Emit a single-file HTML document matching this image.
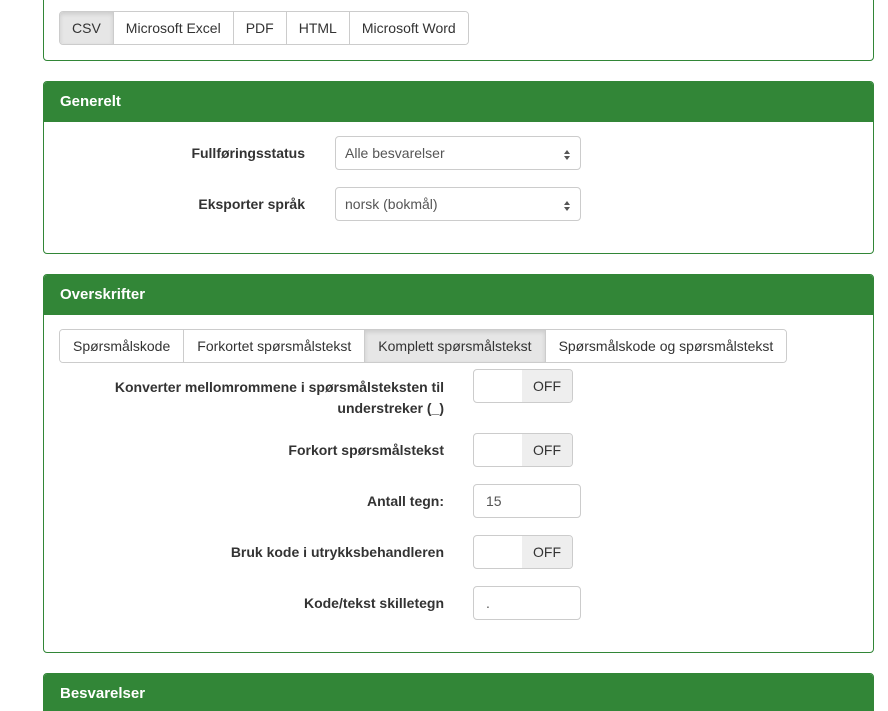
<!DOCTYPE html>
<html><head><style>
*{box-sizing:border-box}
html,body{margin:0;width:888px;height:711px;overflow:hidden}
body{background:#fff;font-family:"Liberation Sans",Arial,sans-serif;font-size:14px;color:#333;position:relative}
.panel{position:absolute;left:43px;width:831px;border:1px solid #328637;border-radius:4px}
.hd{background:#328637;color:#fff;font-weight:bold;font-size:15px;height:40px;line-height:40px;padding-left:16px;border-radius:3px 3px 0 0}
.grp{position:absolute;display:flex;height:34px;border:1px solid #ccc;border-radius:4px;overflow:hidden}
.grp div{padding:0 12px;line-height:32px;border-left:1px solid #ccc;background:#fff;color:#333}
.grp.b div{padding:0 13px}
.grp div:first-child{border-left:none}
.grp .on{background:#e6e6e6;box-shadow:inset 0 2px 4px rgba(0,0,0,.12)}
.lbl{position:absolute;font-weight:bold;text-align:right;font-size:14px}
.sel{position:absolute;height:34px;width:246px;border:1px solid #ccc;border-radius:4px;padding-left:9px;line-height:32px;color:#555}
.sel:after{content:"";position:absolute;right:10px;top:10px;border:3px solid transparent;border-bottom:4px solid #555;}
.sel:before{content:"";position:absolute;right:10px;top:19px;border:3px solid transparent;border-top:4px solid #555;}
.tg{position:absolute;width:100px;height:34px;border:1px solid #ccc;border-radius:4px;overflow:hidden}
.tg span{position:absolute;right:0;top:0;width:50px;height:32px;background:#eee;text-align:center;line-height:32px;color:#333}
.inp{position:absolute;width:108px;height:34px;border:1px solid #ccc;border-radius:4px;padding-left:12px;line-height:32px;color:#555}
</style></head><body>
<div class="panel" style="top:-10px;height:71px"></div>
<div class="grp" style="left:59px;top:11px">
<div class="on">CSV</div><div>Microsoft Excel</div><div>PDF</div><div>HTML</div><div>Microsoft Word</div></div>

<div class="panel" style="top:81px;height:173px"><div class="hd">Generelt</div></div>
<div class="lbl" style="right:583px;top:145px">Fullføringsstatus</div>
<div class="sel" style="left:335px;top:136px">Alle besvarelser</div>
<div class="lbl" style="right:583px;top:196px">Eksporter språk</div>
<div class="sel" style="left:335px;top:187px">norsk (bokmål)</div>

<div class="panel" style="top:274px;height:379px"><div class="hd">Overskrifter</div></div>
<div class="grp b" style="left:59px;top:329px">
<div>Spørsmålskode</div><div>Forkortet spørsmålstekst</div><div class="on">Komplett spørsmålstekst</div><div>Spørsmålskode og spørsmålstekst</div></div>
<div class="lbl" style="right:444px;top:377px;line-height:21px">Konverter mellomrommene i spørsmålsteksten til<br>understreker (_)</div>
<div class="tg" style="left:473px;top:369px"><span>OFF</span></div>
<div class="lbl" style="right:444px;top:442px">Forkort spørsmålstekst</div>
<div class="tg" style="left:473px;top:433px"><span>OFF</span></div>
<div class="lbl" style="right:444px;top:493px">Antall tegn:</div>
<div class="inp" style="left:473px;top:484px">15</div>
<div class="lbl" style="right:444px;top:544px">Bruk kode i utrykksbehandleren</div>
<div class="tg" style="left:473px;top:535px"><span>OFF</span></div>
<div class="lbl" style="right:444px;top:595px">Kode/tekst skilletegn</div>
<div class="inp" style="left:473px;top:586px">.</div>

<div class="panel" style="top:673px;height:60px"><div class="hd">Besvarelser</div></div>
</body></html>
